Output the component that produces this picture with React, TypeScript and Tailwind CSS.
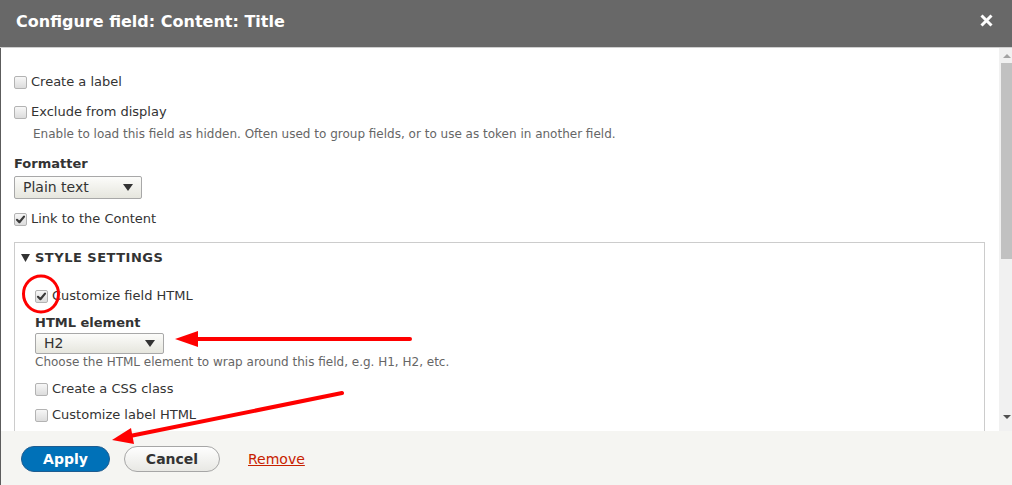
import React from "react";

function Box({ checked = false }: { checked?: boolean }) {
    return (
        <span className="relative inline-flex w-[13px] h-[13px] shrink-0 rounded-[2px] border border-[#b3b3b3] bg-gradient-to-b from-[#f7f7f7] to-[#dcdcdc]">
            {checked && (
                <svg viewBox="0 0 13 13" className="absolute inset-0 w-[13px] h-[13px] -m-px">
                    <path d="M3 6.8 L5.4 9.2 L10 3.6" fill="none" stroke="#3a3a3a" strokeWidth="2.2" strokeLinecap="round" strokeLinejoin="round" />
                </svg>
            )}
        </span>
    );
}

function Check({ label, checked, className = "" }: { label: string; checked?: boolean; className?: string }) {
    return (
        <div className={`flex items-center gap-[4px] h-[18px] ${className}`}>
            <Box checked={checked} />
            <span className="text-[13px] text-[#333] leading-[18px]">{label}</span>
        </div>
    );
}

function Select({ value, w }: { value: string; w: string }) {
    return (
        <div className={`flex items-center justify-between ${w} pl-[8px] pr-[8px] border border-[#a8a8a8] rounded-[2px] bg-gradient-to-b from-[#fcfcfa] to-[#e6e6de] text-[14px] text-[#333]`}>
            <span>{value}</span>
            <svg width="10" height="7" viewBox="0 0 10 7">
                <path d="M0 0 H10 L5 7 Z" fill="#333" />
            </svg>
        </div>
    );
}

export default function App() {
    return (
        <div className="relative w-[1012px] h-[485px] flex flex-col overflow-hidden bg-white font-['DejaVu_Sans',sans-serif]">
            {/* Title bar */}
            <header className="h-[48px] shrink-0 bg-[#686868] border-b border-[#cfcfcf] flex items-start justify-between pl-[16px] pr-[20px] pt-[12px]">
                <h1 className="text-[16px] leading-[20px] font-bold text-white">Configure field: Content: Title</h1>
                <svg width="13" height="13" viewBox="0 0 13 13" className="mt-[2px] mr-[-1px]">
                    <path d="M1.5 1.5 L11.5 11.5 M11.5 1.5 L1.5 11.5" stroke="#fff" strokeWidth="3" />
                </svg>
            </header>

            {/* Body */}
            <div className="flex-1 flex min-h-0 border-l border-[#5c5c5c]">
                <div className="flex-1 overflow-hidden pl-[13px] pr-[14px] pt-[25px]">
                    <Check label="Create a label" />
                    <Check label="Exclude from display" className="mt-[12px]" />
                    <p className="mt-[5px] pl-[19px] text-[12px] leading-[16px] text-[#666]">
                        Enable to load this field as hidden. Often used to group fields, or to use as token in another field.
                    </p>
                    <div className="mt-[13px] text-[13px] leading-[18px] font-bold text-[#333]">Formatter</div>
                    <div className="mt-[3px]">
                        <Select value="Plain text" w="w-[128px] h-[23px]" />
                    </div>
                    <Check label="Link to the Content" checked className="mt-[11px]" />

                    <fieldset className="mt-[14px] h-[300px] border border-[#ccc] pl-[20px] pr-[20px] pt-[6px]">
                        <div className="-ml-[14px] flex items-center gap-[5px] h-[18px]">
                            <svg width="9" height="8" viewBox="0 0 9 8">
                                <path d="M0 0 H9 L4.5 8 Z" fill="#333" />
                            </svg>
                            <span className="text-[13px] font-bold tracking-[0.5px] text-[#333]">STYLE SETTINGS</span>
                        </div>
                        <Check label="Customize field HTML" checked className="mt-[20px]" />
                        <div className="mt-[9px] text-[13px] leading-[18px] font-bold text-[#333]">HTML element</div>
                        <div className="mt-[1px]">
                            <Select value="H2" w="w-[129px] h-[21px]" />
                        </div>
                        <p className="mt-[0px] text-[12px] leading-[16px] text-[#666]">
                            Choose the HTML element to wrap around this field, e.g. H1, H2, etc.
                        </p>
                        <Check label="Create a CSS class" className="mt-[10px]" />
                        <Check label="Customize label HTML" className="mt-[8px]" />
                    </fieldset>
                </div>

                {/* Scrollbar */}
                <div className="w-[13px] shrink-0 bg-[#f1f1f1] flex flex-col items-center pl-[2px]">
                    <div className="h-[15px] flex items-center justify-center">
                        <svg width="8" height="4" viewBox="0 0 8 4">
                            <path d="M0 4 L4 0 L8 4 Z" fill="#a3a3a3" />
                        </svg>
                    </div>
                    <div className="w-[11px] h-[196px] bg-[#c1c1c1]" />
                    <div className="flex-1" />
                    <div className="h-[18px] flex items-start justify-center pt-[2px]">
                        <svg width="8" height="4" viewBox="0 0 8 4">
                            <path d="M0 0 L8 0 L4 4 Z" fill="#505050" />
                        </svg>
                    </div>
                </div>
            </div>

            {/* Footer */}
            <footer className="h-[54px] shrink-0 bg-[#f5f5f2] border-l border-[#5c5c5c] flex items-center pl-[20px] pt-[2px] gap-[14px]">
                <button className="h-[26px] w-[89px] rounded-full bg-[#0071b8] border border-[#1e5c90] text-white font-bold text-[14px]">
                    Apply
                </button>
                <button className="h-[26px] w-[96px] rounded-full bg-gradient-to-b from-[#fefefe] to-[#e8e8e4] border border-[#a6a6a6] text-[#333] font-bold text-[14px]">
                    Cancel
                </button>
                <a className="ml-[14px] text-[14px] text-[#c72100] underline">Remove</a>
            </footer>

            {/* Annotations */}
            <svg className="absolute inset-0 pointer-events-none" width="1012" height="485">
                <ellipse cx="41" cy="294" rx="17.5" ry="18" fill="none" stroke="#f00" strokeWidth="3" />
                <line x1="410" y1="339" x2="194" y2="339" stroke="#f00" strokeWidth="4" strokeLinecap="round" />
                <path d="M175 339 L198 331 L198 347 Z" fill="#f00" />
                <line x1="342" y1="393" x2="130" y2="436" stroke="#f00" strokeWidth="4" strokeLinecap="round" />
                <path d="M112 440 L131 428 L134 444 Z" fill="#f00" />
            </svg>
        </div>
    );
}
